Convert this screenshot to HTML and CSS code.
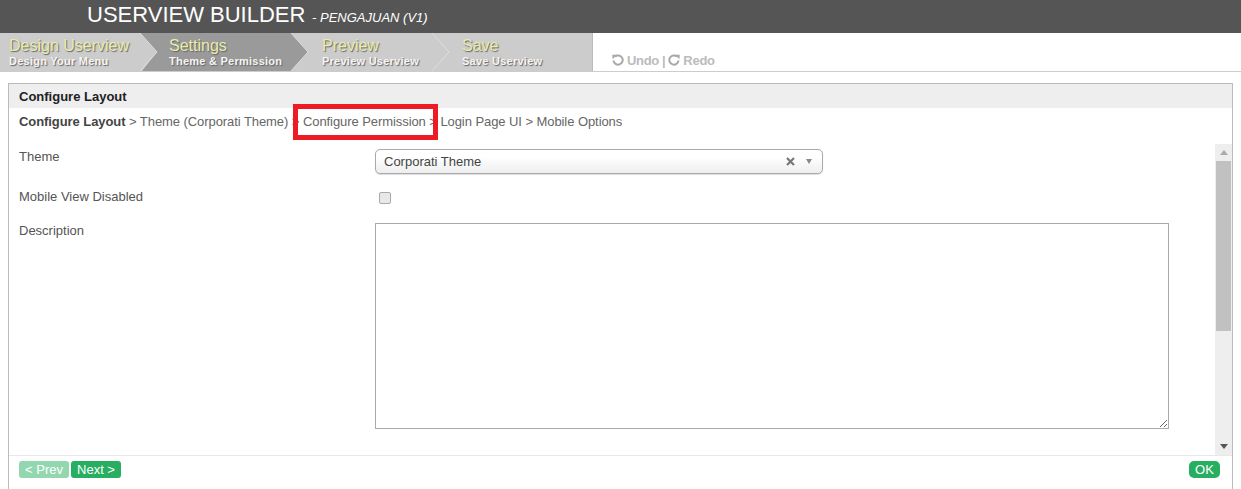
FILE: index.html
```html
<!DOCTYPE html>
<html>
<head>
  <title>Userview Builder</title>
  <link rel="stylesheet" href="styles.css">
</head>
<body>
  <div class="header">
    <span class="header-title">USERVIEW BUILDER</span>
    <span class="header-sub">- PENGAJUAN (V1)</span>
  </div>

  <div class="toolbar">
    <div class="steps">
      <div class="step step-first">
        <svg class="chevron" width="20" height="38" viewBox="0 0 20 38"><polyline points="1,0 18,19 1,38"/></svg>
        <div class="step-name">Design Userview</div>
        <div class="step-desc">Design Your Menu</div>
      </div>
      <div class="step step-settings active">
        <svg class="chevron" width="20" height="38" viewBox="0 0 20 38"><polyline points="1,0 18,19 1,38"/></svg>
        <div class="step-name">Settings</div>
        <div class="step-desc">Theme &amp; Permission</div>
      </div>
      <div class="step step-preview">
        <svg class="chevron" width="20" height="38" viewBox="0 0 20 38"><polyline points="1,0 18,19 1,38"/></svg>
        <div class="step-name">Preview</div>
        <div class="step-desc">Preview Userview</div>
      </div>
      <div class="step step-save">
        <div class="step-name">Save</div>
        <div class="step-desc">Save Userview</div>
      </div>
    </div>
    <div class="history">
      <svg class="history-icon" width="12" height="12" viewBox="0 0 12 12"><path d="M3 2.6 A4.6 4.6 0 1 1 1.5 6.5"/><polygon class="arrow" points="0.3,0.8 5,0.8 0.6,5.2"/></svg>
      <span>Undo</span>
      <b>|</b>
      <svg class="history-icon" width="12" height="12" viewBox="0 0 12 12"><path d="M9 2.6 A4.6 4.6 0 1 0 10.5 6.5"/><polygon class="arrow" points="11.7,0.8 7,0.8 11.4,5.2"/></svg>
      <span>Redo</span>
    </div>
  </div>

  <div class="panel">
    <div class="panel-title">Configure Layout</div>
    <div class="crumbs">
      <strong>Configure Layout</strong> &gt; Theme (Corporati Theme) &gt; Configure Permission &gt; Login Page UI &gt; Mobile Options
    </div>
    <div class="highlight"></div>

    <div class="panel-body">
      <div class="form">
        <div class="row row-theme">
          <label>Theme</label>
          <div class="select">
            <span class="select-value">Corporati Theme</span>
            <svg class="select-clear" width="9" height="9" viewBox="0 0 9 9"><path d="M1 1 L8 8 M8 1 L1 8"/></svg>
            <span class="select-arrow"></span>
          </div>
        </div>
        <div class="row row-mobile">
          <label for="mobile">Mobile View Disabled</label>
          <input type="checkbox" id="mobile" class="check">
        </div>
        <div class="row row-desc">
          <label for="description">Description</label>
          <textarea id="description" class="textarea"></textarea>
        </div>
      </div>
      <div class="scrollbar">
        <span class="scroll-up"></span>
        <div class="scroll-track"><div class="scroll-thumb"></div></div>
        <span class="scroll-down"></span>
      </div>
    </div>

    <div class="panel-footer">
      <button type="button" class="btn btn-off">&lt; Prev</button>
      <button type="button" class="btn">Next &gt;</button>
      <button type="button" class="btn btn-ok">OK</button>
    </div>
  </div>
</body>
</html>
```

FILE: styles.css
```css
html, body {
  margin: 0;
  padding: 0;
  height: 489px;
  overflow: hidden;
  background-color: #fff;
  font-family: "Liberation Sans", Arial, sans-serif;
  font-size: 13px;
  color: #555;
}

.header {
  height: 33px;
  box-sizing: border-box;
  padding: 1px 0 0 87px;
  background-color: #555;
  color: #fff;
  line-height: 27px;
  white-space: nowrap;
}

.header-title {
  font-size: 22px;
}

.header-sub {
  margin-left: 3px;
  font-size: 13px;
  font-style: italic;
}

.toolbar {
  display: flex;
  height: 39px;
  box-sizing: border-box;
  border-bottom: 1px solid #ccc;
}

.steps {
  display: flex;
  width: 593px;
  background-color: #ccc;
  border-right: 1px solid #bbb;
  box-sizing: border-box;
}

.step {
  position: relative;
  box-sizing: border-box;
  padding-top: 4px;
  color: #fff;
  white-space: nowrap;
}

.step-first {
  width: 141px;
  padding-left: 9px;
}

.step-settings {
  width: 151px;
  padding-left: 28px;
}

.step-preview {
  width: 140px;
  padding-left: 30px;
}

.step-save {
  padding-left: 30px;
}

.step.active::before {
  content: "";
  position: absolute;
  top: 0;
  bottom: 0;
  left: -1px;
  right: -16px;
  background-color: #9a9a9a;
  clip-path: polygon(0 0, 151px 0, 100% 50%, 151px 100%, 2px 100%, 17px 50%);
}

.step > div {
  position: relative;
}

.chevron {
  position: absolute;
  z-index: 1;
  top: 0;
  right: -18px;
}

.step-preview .chevron {
  right: -19px;
}

.chevron polyline {
  fill: none;
  stroke: #ddd;
  stroke-width: 1;
}

.step-name {
  font-size: 16px;
  line-height: 17px;
  color: #e8ecac;
  text-shadow: 1px 1px 1px #666;
}

.step-desc {
  margin-top: 1px;
  font-size: 11px;
  font-weight: bold;
  line-height: 13px;
  letter-spacing: 0.25px;
  color: #f4f4f4;
  text-shadow: 1px 1px 1px #666;
}

.history {
  display: flex;
  align-items: center;
  gap: 3px;
  padding: 16px 0 0 19px;
  font-size: 13px;
  font-weight: bold;
  letter-spacing: -0.3px;
  color: #bbb;
}

.history-icon path {
  fill: none;
  stroke: #a8a8a8;
  stroke-width: 2;
}

.history-icon .arrow {
  fill: #a8a8a8;
}

.panel {
  position: relative;
  height: 406px;
  box-sizing: border-box;
  margin: 11px 8px 0;
  border: 1px solid #bbb;
  border-width: 1px 1px 0;
  display: flex;
  flex-direction: column;
}

.panel-title {
  height: 24px;
  padding-left: 10px;
  background-color: #eee;
  color: #222;
  font-weight: bold;
  line-height: 26px;
}

.crumbs {
  height: 36px;
  padding-left: 10px;
  line-height: 27px;
  letter-spacing: -0.07px;
  color: #666;
}

.crumbs strong {
  color: #444;
}

.highlight {
  position: absolute;
  top: 20px;
  left: 284px;
  width: 135px;
  height: 26px;
  border: 5px solid #ed1c24;
}

.panel-body {
  display: flex;
  height: 311px;
  border-bottom: 1px solid #e8e8e8;
}

.form {
  flex: 1;
  padding-left: 10px;
}

.row {
  display: flex;
  align-items: flex-start;
}

.row label {
  width: 356px;
}

.row-theme {
  height: 40px;
  padding-top: 5px;
}

.row-mobile {
  height: 34px;
}

.select {
  display: flex;
  align-items: center;
  width: 448px;
  height: 25px;
  box-sizing: border-box;
  padding: 0 10px 0 8px;
  border: 1px solid #aaa;
  border-radius: 5px;
  background: linear-gradient(#fff 30%, #eee 100%);
  box-shadow: 0 1px 1px #ddd;
  color: #444;
}

.select-value {
  flex: 1;
}

.select-clear {
  margin-right: 11px;
}

.select-clear path {
  fill: none;
  stroke: #777;
  stroke-width: 2.2;
}

.select-arrow {
  width: 0;
  height: 0;
  border: 3.5px solid transparent;
  border-top: 5px solid #888;
  border-bottom: 0;
}

.check {
  appearance: none;
  width: 12px;
  height: 12px;
  margin: 3px 0 0 4px;
  border: 1px solid #aaa;
  border-radius: 2px;
  background-color: #e8e8e8;
}

.textarea {
  width: 794px;
  height: 206px;
  box-sizing: border-box;
  margin: 0;
  padding: 2px;
  border: 1px solid #aaa;
}

.scrollbar {
  display: flex;
  flex-direction: column;
  align-items: center;
  width: 17px;
  background-color: #eee;
}

.scroll-up,
.scroll-down {
  width: 0;
  height: 0;
  margin: 6px 0;
  border: 4px solid transparent;
  border-top: 0;
  border-bottom: 5px solid #aaa;
}

.scroll-down {
  border-top: 5px solid #555;
  border-bottom: 0;
}

.scroll-track {
  flex: 1;
  align-self: stretch;
  padding: 0 1px;
}

.scroll-thumb {
  height: 170px;
  background-color: #c1c1c1;
}

.panel-footer {
  display: flex;
  gap: 2px;
  padding: 5px 12px 0 10px;
}

.btn {
  width: 50px;
  height: 17px;
  padding: 0;
  border: none;
  border-radius: 3px;
  background-color: #27ae60;
  color: #fff;
  font-family: inherit;
  font-size: 13px;
  line-height: 17px;
}

.btn-off {
  background-color: #93d7af;
}

.btn-ok {
  width: 31px;
  margin-left: auto;
  border-radius: 5px;
}
```
